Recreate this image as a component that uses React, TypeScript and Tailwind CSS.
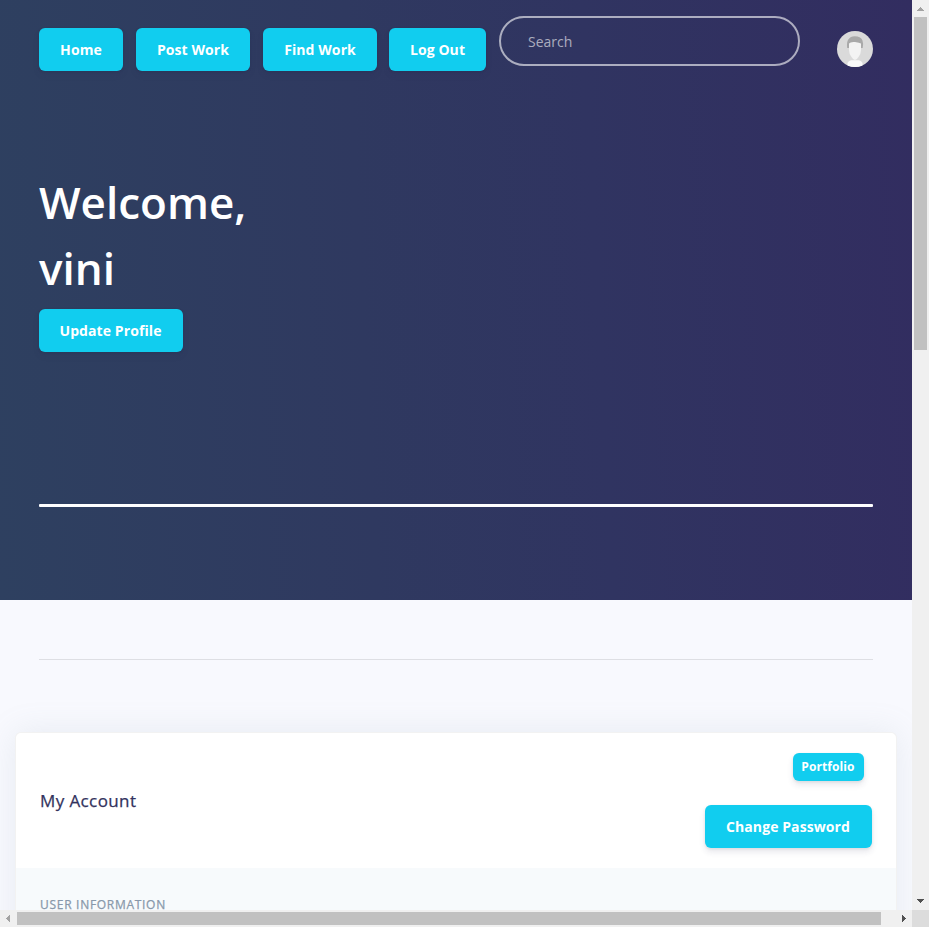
import React from "react";

const buttonBase =
  "flex shrink-0 items-center justify-center whitespace-nowrap rounded-md bg-[#11cdef] font-bold tracking-[0.09px] text-white shadow-[0_4px_6px_rgba(50,50,93,0.11),0_1px_3px_rgba(0,0,0,0.08)]";

function Button({ label, className }: { label: string; className: string }) {
  return <button className={`${buttonBase} ${className}`}>{label}</button>;
}

function Avatar() {
  return (
    <svg className="mt-[31px] ml-[37px] size-9 shrink-0" viewBox="0 0 36 36">
      <defs>
        <clipPath id="avatar-circle">
          <circle cx="18" cy="18" r="18" />
        </clipPath>
        <filter id="avatar-soft" x="-10%" y="-10%" width="120%" height="120%">
          <feGaussianBlur stdDeviation="0.6" />
        </filter>
      </defs>
      <g clipPath="url(#avatar-circle)">
        <rect width="36" height="36" fill="#dadada" />
        <g filter="url(#avatar-soft)">
          <path d="M10.500 38v-6q1-2 3.500-2.800h8q2.500 .8 3.500 2.800V38z" fill="#fafafa" />
          <path d="M10.200 17q-1-7 2-9.500 1-2 5.500-2.300 6 .1 7.700 4 1.200 3 .3 7.800z" fill="#a9a9a9" />
          <path d="M12 12.500q1.500-2 6-1.500t6 1.500v6.500q0 4-2.500 7-1.800 3-3.500 3t-3.500-3q-2.500-3-2.500-7z" fill="#f3f3f3" />
        </g>
      </g>
    </svg>
  );
}

function Hero() {
  return (
    <header className="h-[600px] bg-[linear-gradient(87deg,#2e4060_0%,#2f3960_40%,#303461_65%,#322d60_100%)] px-[39px]">
      <nav className="flex h-[72px] items-start">
        <Button label="Home" className="mt-7 h-[43px] w-[84px] text-sm" />
        <Button label="Post Work" className="mt-7 ml-[13px] h-[43px] w-[114px] text-sm" />
        <Button label="Find Work" className="mt-7 ml-[13px] h-[43px] w-[114px] text-sm" />
        <Button label="Log Out" className="mt-7 ml-3 h-[43px] w-[97px] text-sm" />
        <input
          placeholder="Search"
          className="mt-4 ml-[13px] h-[50px] w-[301px] shrink-0 rounded-full border-2 border-white/60 bg-transparent px-[27px] text-sm text-white outline-none placeholder:text-white/60"
        />
        <Avatar />
      </nav>
      <h1 className="mt-[97px] text-[44px] leading-[66px] font-semibold text-white">
        Welcome,
        <br />
        vini
      </h1>
      <Button label="Update Profile" className="mt-2 h-[43px] w-36 pr-px text-sm" />
      <div className="mt-[152px] h-[3px] rounded-[1px] bg-white" />
    </header>
  );
}

function AccountCard() {
  return (
    <section className="mx-[15px] mt-[72px] rounded-md border border-black/5 bg-white shadow-[0_0_32px_rgba(136,152,170,0.15)]">
      <div className="flex h-[135px] items-center justify-between px-6">
        <h3 className="text-[17px] leading-6 tracking-[0.4px] text-[#32325d] [-webkit-text-stroke:0.25px_#32325d]">
          My Account
        </h3>
        <div className="flex flex-col items-end">
          <Button label="Portfolio" className="mr-2 h-7 w-[71px] pr-px text-xs" />
          <Button label="Change Password" className="mt-6 h-[43px] w-[167px] pr-px text-sm" />
        </div>
      </div>
      <div className="h-[200px] bg-[#f7fafc] px-6 pt-[31px]">
        <h6 className="text-xs leading-3 tracking-[0.71px] text-[#8898aa] [-webkit-text-stroke:0.25px_#8898aa]">
          USER INFORMATION
        </h6>
      </div>
    </section>
  );
}

function VerticalScrollbar() {
  return (
    <div className="flex h-[910px] w-[17px] flex-col items-center bg-[#f0f0f0]">
      <svg className="h-[17px] w-[17px] shrink-0" viewBox="0 0 17 17" shapeRendering="crispEdges">
        <path d="M8 7h1v1h1v1h1v1h1v1H5v-1h1V9h1V8h1z" fill="#a3a3a3" />
      </svg>
      <div className="h-[333px] w-[13px] shrink-0 bg-[#c1c1c1]" />
      <div className="grow" />
      <svg className="h-[17px] w-[17px] shrink-0" viewBox="0 0 17 17" shapeRendering="crispEdges">
        <path d="M5 6h7v1h-1v1h-1v1H9v1H8V9H7V8H6V7H5z" fill="#505050" />
      </svg>
    </div>
  );
}

function HorizontalScrollbar() {
  return (
    <div className="flex h-[17px] w-[912px] items-center bg-[#f0f0f0]">
      <svg className="h-[17px] w-[17px] shrink-0" viewBox="0 0 17 17" shapeRendering="crispEdges">
        <path d="M10 5v7H9v-1H8v-1H7V9H6V8h1V7h1V6h1V5z" fill="#a3a3a3" />
      </svg>
      <div className="h-[13px] w-[864px] shrink-0 bg-[#c1c1c1]" />
      <div className="grow" />
      <svg className="h-[17px] w-[17px] shrink-0" viewBox="0 0 17 17" shapeRendering="crispEdges">
        <path d="M7 5h1v1h1v1h1v1h1v1h-1v1H9v1H8v1H7z" fill="#505050" />
      </svg>
    </div>
  );
}

export default function App() {
  return (
    <div className="grid h-[927px] w-[929px] grid-cols-[912px_17px] grid-rows-[910px_17px] overflow-hidden font-['Open_Sans',sans-serif]">
      <main className="h-[910px] overflow-hidden bg-[#f8f9fe]">
        <Hero />
        <div className="mx-[39px] mt-[59px] h-px bg-black/10" />
        <AccountCard />
      </main>
      <VerticalScrollbar />
      <HorizontalScrollbar />
      <div className="bg-[#dcdcdc]" />
    </div>
  );
}
